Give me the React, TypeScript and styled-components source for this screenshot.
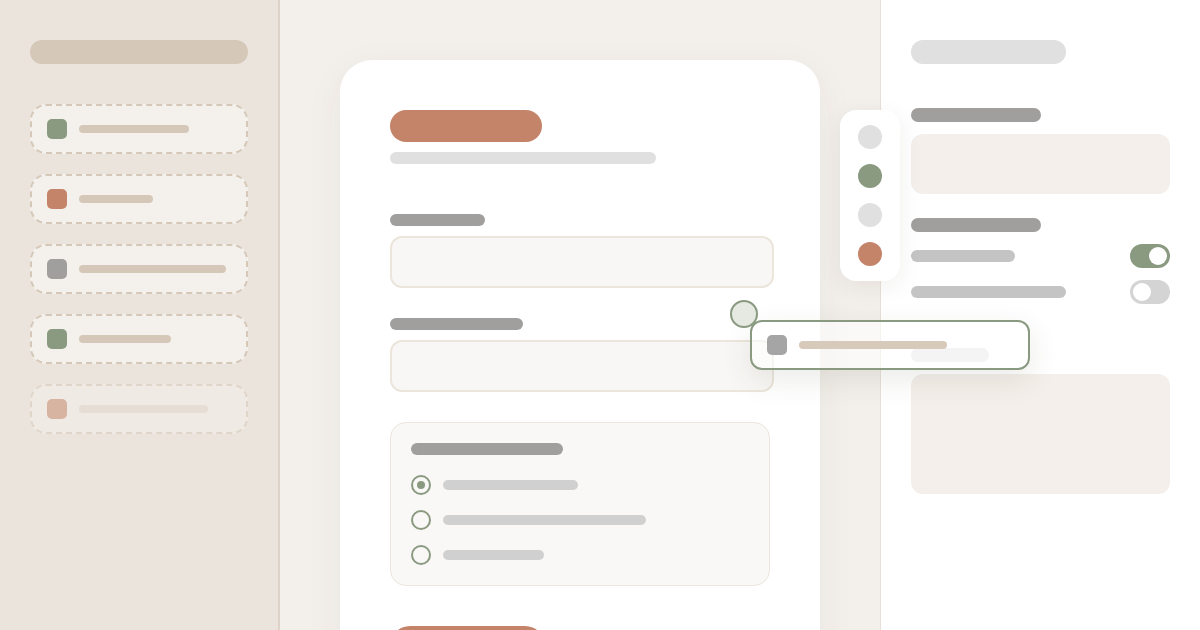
import React from 'react'
import styled, { createGlobalStyle } from 'styled-components'

const GlobalStyle = createGlobalStyle`
  html, body {
    margin: 0;
    padding: 0;
    background: #f3efeb;
    font-family: "Inter", "Liberation Sans", sans-serif;
  }
`

const clay = '#c4846a'
const sage = '#8a9a80'
const stone = '#a09f9d'

const sideItems = [
  { color: sage, bar: 110 },
  { color: clay, bar: 74 },
  { color: stone, bar: 147 },
  { color: sage, bar: 92 },
  { color: clay, bar: 129, faded: true },
]

const radios = [
  { bar: 135, checked: true },
  { bar: 203 },
  { bar: 101 },
]

const swatches = ['#e0e0e0', sage, '#e0e0e0', clay]

const App = () => {
  return (
    <Page>
      <GlobalStyle />

      <Sidebar>
        <SideTitle />
        <ItemList>
          {sideItems.map((item, i) => (
            <DragItem key={i} $faded={item.faded}>
              <ItemIcon $color={item.color} />
              <Bar $w={item.bar} $h={8} $color={item.faded ? '#e2d9ce' : '#d5c8b8'} />
            </DragItem>
          ))}
        </ItemList>
      </Sidebar>

      <Canvas>
        <FormCard>
          <CardHeader>
            <TitlePill />
            <Bar $w={266} $h={12} $color="#e0e0e0" />
          </CardHeader>

          <Field>
            <Bar $w={95} $h={12} $color={stone} />
            <Input />
          </Field>

          <Field>
            <Bar $w={133} $h={12} $color={stone} />
            <Input />
          </Field>

          <RadioGroup>
            <Bar $w={152} $h={12} $color={stone} />
            <RadioList>
              {radios.map((r, i) => (
                <RadioRow key={i}>
                  <Radio $checked={r.checked} />
                  <Bar $w={r.bar} $h={10} $color="#d0d0d0" />
                </RadioRow>
              ))}
            </RadioList>
          </RadioGroup>

          <SubmitPill />
        </FormCard>
      </Canvas>

      <Inspector>
        <InspectorTitle />

        <Section $top={44}>
          <Bar $w={130} $h={14} $color={stone} />
          <PropBox $h={60} />
        </Section>

        <Section $top={24}>
          <Bar $w={130} $h={14} $color={stone} />
          <ToggleList>
            <ToggleRow>
              <Bar $w={104} $h={12} $color="#c4c4c4" />
              <Toggle $on />
            </ToggleRow>
            <ToggleRow>
              <Bar $w={155} $h={12} $color="#c4c4c4" />
              <Toggle />
            </ToggleRow>
          </ToggleList>
        </Section>

        <Section $top={44}>
          <Bar $w={78} $h={14} $color="#e3e3e3" />
          <PropBox $h={120} />
        </Section>
      </Inspector>

      <Palette>
        {swatches.map((c, i) => (
          <Swatch key={i} $color={c} />
        ))}
      </Palette>

      <DropCursor />
      <DragGhost>
        <ItemIcon $color="#a5a5a5" />
        <Bar $w={148} $h={8} $color="#d8cabb" />
      </DragGhost>
    </Page>
  )
}

export default App

const Page = styled.div`
  position: relative;
  display: flex;
  width: 1200px;
  height: 630px;
  overflow: hidden;
  background: #f3efeb;
`

const Bar = styled.div<{ $w: number; $h: number; $color: string }>`
  flex-shrink: 0;
  width: ${(p) => p.$w}px;
  height: ${(p) => p.$h}px;
  border-radius: ${(p) => p.$h / 2}px;
  background: ${(p) => p.$color};
`

/* sidebar */

const Sidebar = styled.aside`
  width: 280px;
  flex-shrink: 0;
  box-sizing: border-box;
  padding: 40px 30px;
  background: #ebe4dc;
  border-right: 2px solid #ddd3c8;
  display: flex;
  flex-direction: column;
  gap: 40px;
`

const SideTitle = styled.div`
  height: 24px;
  border-radius: 12px;
  background: #d5c8b8;
`

const ItemList = styled.div`
  display: flex;
  flex-direction: column;
  gap: 20px;
`

const DragItem = styled.div<{ $faded?: boolean }>`
  height: 50px;
  box-sizing: border-box;
  display: flex;
  align-items: center;
  gap: 12px;
  padding: 0 15px;
  border: 2px dashed #d5c8b8;
  border-radius: 16px;
  background: #f4f0ec;
  opacity: ${(p) => (p.$faded ? 0.5 : 1)};
`

const ItemIcon = styled.div<{ $color: string }>`
  width: 20px;
  height: 20px;
  flex-shrink: 0;
  border-radius: 5px;
  background: ${(p) => p.$color};
`

/* canvas */

const Canvas = styled.main`
  flex: 1;
  padding: 60px 60px 0;
  background: #f3efeb;
`

const FormCard = styled.section`
  width: 480px;
  box-sizing: border-box;
  padding: 50px;
  background: #ffffff;
  border-radius: 32px;
  box-shadow: 0 10px 40px rgba(80, 60, 40, 0.05);
  display: flex;
  flex-direction: column;
`

const CardHeader = styled.div`
  display: flex;
  flex-direction: column;
  gap: 10px;
  margin-bottom: 50px;
`

const TitlePill = styled.div`
  width: 152px;
  height: 32px;
  border-radius: 16px;
  background: ${clay};
`

const Field = styled.div`
  display: flex;
  flex-direction: column;
  gap: 10px;
  margin-bottom: 30px;
`

const Input = styled.div`
  width: 100%;
  height: 48px;
  box-sizing: content-box;
  border: 2px solid #ece5db;
  border-radius: 12px;
  background: #f8f7f5;
`

const RadioGroup = styled.div`
  width: 100%;
  box-sizing: border-box;
  padding: 20px;
  border: 1px solid #ece6dc;
  border-radius: 16px;
  background: #f9f8f6;
  display: flex;
  flex-direction: column;
  gap: 20px;
`

const RadioList = styled.div`
  display: flex;
  flex-direction: column;
  gap: 15px;
`

const RadioRow = styled.div`
  display: flex;
  align-items: center;
  gap: 12px;
`

const Radio = styled.div<{ $checked?: boolean }>`
  width: 20px;
  height: 20px;
  box-sizing: border-box;
  border: 2px solid ${sage};
  border-radius: 50%;
  display: flex;
  align-items: center;
  justify-content: center;

  &::after {
    content: '';
    width: 8px;
    height: 8px;
    border-radius: 50%;
    background: ${sage};
    display: ${(p) => (p.$checked ? 'block' : 'none')};
  }
`

const SubmitPill = styled.div`
  width: 155px;
  height: 40px;
  margin-top: 40px;
  border-radius: 20px;
  background: ${clay};
`

/* inspector */

const Inspector = styled.aside`
  width: 320px;
  flex-shrink: 0;
  box-sizing: border-box;
  padding: 40px 30px 0 30px;
  background: #ffffff;
  border-left: 1px solid #e8e0d6;
`

const InspectorTitle = styled.div`
  width: 155px;
  height: 24px;
  border-radius: 12px;
  background: #e0e0e0;
`

const Section = styled.div<{ $top: number }>`
  margin-top: ${(p) => p.$top}px;
  display: flex;
  flex-direction: column;
  gap: 12px;
`

const PropBox = styled.div<{ $h: number }>`
  height: ${(p) => p.$h}px;
  border-radius: 12px;
  background: #f4efea;
`

const ToggleList = styled.div`
  display: flex;
  flex-direction: column;
  gap: 12px;
`

const ToggleRow = styled.div`
  display: flex;
  align-items: center;
  justify-content: space-between;
`

const Toggle = styled.div<{ $on?: boolean }>`
  width: 40px;
  height: 24px;
  box-sizing: border-box;
  border-radius: 12px;
  padding: 3px;
  background: ${(p) => (p.$on ? sage : '#d4d4d4')};
  display: flex;
  justify-content: ${(p) => (p.$on ? 'flex-end' : 'flex-start')};

  &::after {
    content: '';
    width: 18px;
    height: 18px;
    border-radius: 50%;
    background: #ffffff;
  }
`

/* floating overlays */

const Palette = styled.div`
  position: absolute;
  left: 840px;
  top: 110px;
  width: 60px;
  box-sizing: border-box;
  padding: 15px 0;
  border-radius: 16px;
  background: #ffffff;
  box-shadow: 0 6px 24px rgba(60, 40, 20, 0.07);
  display: flex;
  flex-direction: column;
  align-items: center;
  gap: 15px;
`

const Swatch = styled.div<{ $color: string }>`
  width: 24px;
  height: 24px;
  border-radius: 50%;
  background: ${(p) => p.$color};
`

const DropCursor = styled.div`
  position: absolute;
  left: 730px;
  top: 300px;
  width: 28px;
  height: 28px;
  box-sizing: border-box;
  border-radius: 50%;
  border: 2px solid ${sage};
  background: #e5e9e1;
  z-index: 3;
`

const DragGhost = styled.div`
  position: absolute;
  left: 750px;
  top: 320px;
  width: 280px;
  height: 50px;
  box-sizing: border-box;
  padding: 0 15px;
  border: 2px solid ${sage};
  border-radius: 12px;
  background: rgba(255, 255, 255, 0.6);
  box-shadow: 0 10px 30px rgba(60, 60, 40, 0.1);
  display: flex;
  align-items: center;
  gap: 12px;
  z-index: 2;
`
